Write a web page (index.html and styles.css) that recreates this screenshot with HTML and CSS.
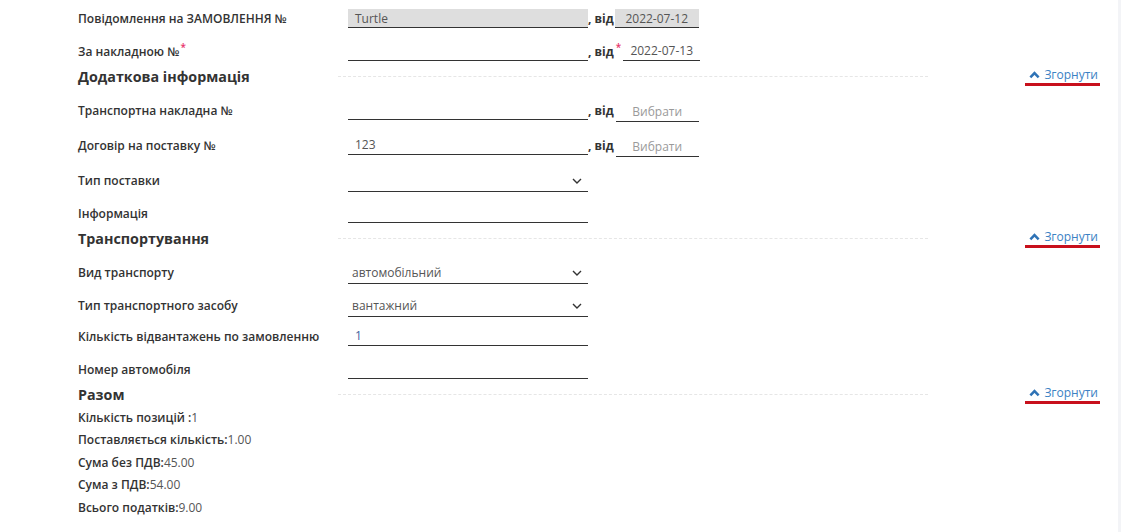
FILE: index.html
```html
<!DOCTYPE html>
<html lang="uk">
<head>
<meta charset="utf-8">
<title>Повідомлення на замовлення</title>
<link rel="stylesheet" href="styles.css">
</head>
<body>
<div class="page">
  <div class="form">
    <div class="row">
      <div class="label">Повідомлення на ЗАМОВЛЕННЯ №</div>
      <div class="field field--disabled">Turtle</div>
      <span class="from">, від</span>
      <div class="date date--disabled">2022-07-12</div>
    </div>
    <div class="row row--last">
      <div class="label">За накладною №<sup class="req">*</sup></div>
      <div class="field"></div>
      <span class="from">, від</span><sup class="req req--date">*</sup>
      <div class="date date--narrow">2022-07-13</div>
    </div>

    <div class="section-head">
      <h2 class="title">Додаткова інформація</h2>
      <div class="dash"></div>
      <a class="toggle" href="#"><svg class="caret" viewBox="0 0 12 8" width="11" height="8"><polyline points="1.5,6.5 6,2 10.5,6.5"/></svg>Згорнути</a>
    </div>
    <div class="row row--tall">
      <div class="label">Транспортна накладна №</div>
      <div class="field"></div>
      <span class="from">, від</span>
      <div class="date placeholder">Вибрати</div>
    </div>
    <div class="row row--tall">
      <div class="label">Договір на поставку №</div>
      <div class="field">123</div>
      <span class="from">, від</span>
      <div class="date placeholder">Вибрати</div>
    </div>
    <div class="row">
      <div class="label">Тип поставки</div>
      <div class="field field--select"><span></span><svg class="down" viewBox="0 0 10 6" width="10" height="6"><polyline points="1,1 5,5 9,1"/></svg></div>
    </div>
    <div class="row row--last">
      <div class="label">Інформація</div>
      <div class="field"></div>
    </div>

    <div class="section-head">
      <h2 class="title">Транспортування</h2>
      <div class="dash"></div>
      <a class="toggle" href="#"><svg class="caret" viewBox="0 0 12 8" width="11" height="8"><polyline points="1.5,6.5 6,2 10.5,6.5"/></svg>Згорнути</a>
    </div>
    <div class="row">
      <div class="label">Вид транспорту</div>
      <div class="field field--select"><span>автомобільний</span><svg class="down" viewBox="0 0 10 6" width="10" height="6"><polyline points="1,1 5,5 9,1"/></svg></div>
    </div>
    <div class="row row--short">
      <div class="label">Тип транспортного засобу</div>
      <div class="field field--select"><span>вантажний</span><svg class="down" viewBox="0 0 10 6" width="10" height="6"><polyline points="1,1 5,5 9,1"/></svg></div>
    </div>
    <div class="row">
      <div class="label">Кількість відвантажень по замовленню</div>
      <div class="field field--number">1</div>
    </div>
    <div class="row row--last">
      <div class="label">Номер автомобіля</div>
      <div class="field"></div>
    </div>

    <div class="section-head section-head--totals">
      <h2 class="title">Разом</h2>
      <div class="dash"></div>
      <a class="toggle" href="#"><svg class="caret" viewBox="0 0 12 8" width="11" height="8"><polyline points="1.5,6.5 6,2 10.5,6.5"/></svg>Згорнути</a>
    </div>
    <ul class="totals">
      <li><b>Кількість позицій :</b>1</li>
      <li><b>Поставляється кількість:</b>1.00</li>
      <li><b>Сума без ПДВ:</b>45.00</li>
      <li><b>Сума з ПДВ:</b>54.00</li>
      <li><b>Всього податків:</b>9.00</li>
    </ul>
  </div>
  <div class="side-strip"></div>
</div>
</body>
</html>
```

FILE: styles.css
```css
* {
  box-sizing: border-box;
}

html, body {
  margin: 0;
  padding: 0;
  background: #fff;
}

body {
  font-family: "Open Sans", "Noto Sans", sans-serif;
  font-size: 12px;
  color: #333;
}

.page {
  display: flex;
  min-height: 532px;
}

.form {
  flex: 1;
  padding: 8px 18px 0 78px;
}

.side-strip {
  width: 3px;
  background: #f3f4f7;
}

/* form rows */
.row {
  display: flex;
  align-items: center;
  height: 20px;
  margin-bottom: 13px;
}

.row--tall {
  margin-bottom: 15px;
}

.row--short {
  margin-bottom: 11px;
}

.row--last {
  margin-bottom: 4px;
}

.label {
  width: 270px;
  flex: none;
  font-weight: 600;
  color: #333;
  white-space: nowrap;
}

.req {
  color: #e8336b;
  font-size: 10px;
  font-weight: 600;
  vertical-align: top;
  position: relative;
  top: -3px;
  margin-left: 1px;
}

.req--date {
  margin: 0 0 0 2px;
  top: -4px;
}

.field {
  width: 240px;
  height: 20px;
  padding: 0 7px;
  border-bottom: 1px solid #333;
  display: flex;
  align-items: center;
  color: #555;
  flex: none;
}

.field--disabled {
  background: #dedede;
  height: 19px;
  margin-top: 1px;
}

.field--select {
  justify-content: space-between;
  padding: 0 4px 0 4px;
  height: 22px;
  margin-top: 2px;
}

.field--number {
  color: #3f63a0;
}

.down {
  fill: none;
  stroke: #333;
  stroke-width: 1.4;
  margin-right: 2px;
}

.from {
  font-weight: 700;
  color: #333;
  margin-left: 0;
  white-space: nowrap;
}

.date {
  width: 84px;
  height: 20px;
  margin-left: 1px;
  border-bottom: 1px solid #333;
  display: flex;
  align-items: center;
  justify-content: center;
  color: #555;
  flex: none;
}

.date--disabled {
  background: #dedede;
  height: 19px;
  margin-top: 1px;
}

.date--narrow {
  width: 77px;
  margin-left: 2px;
}

.placeholder {
  color: #9a9a9a;
  width: 83px;
  margin-left: 2px;
  height: 21px;
  margin-top: 3px;
}

/* section headings */
.section-head {
  display: flex;
  align-items: center;
  height: 22px;
  margin-bottom: 13px;
}

.section-head--totals {
  margin-bottom: 2px;
}

.title {
  width: 260px;
  flex: none;
  margin: 0;
  font-size: 14.3px;
  font-weight: 700;
  color: #333;
  white-space: nowrap;
}

.dash {
  width: 590px;
  flex: none;
  border-top: 1px dashed #e6e6e6;
}

.toggle {
  margin-left: auto;
  align-self: flex-end;
  margin-bottom: 1px;
  display: flex;
  align-items: center;
  gap: 4px;
  padding: 0 2px 0 4px;
  height: 20px;
  border-bottom: 3px solid #c8101c;
  color: #3b82c4;
  text-decoration: none;
  font-size: 12px;
  line-height: 17px;
}

.caret {
  fill: none;
  stroke: #2f73b6;
  stroke-width: 2.8;
}

/* totals */
.totals {
  list-style: none;
  margin: 0;
  padding: 0;
}

.totals li {
  line-height: 22.4px;
  color: #555;
}

.totals b {
  font-weight: 600;
  color: #333;
}
```
